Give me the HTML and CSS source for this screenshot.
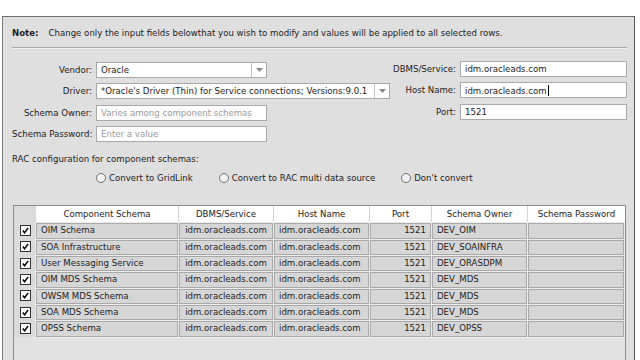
FILE: index.html
```html
<!DOCTYPE html>
<html>
<head>
<meta charset="utf-8">
<link rel="stylesheet" href="styles.css">
</head>
<body>
<div class="top"></div>
<div class="panel">
  <div class="note"><b>Note:</b><span class="note-text">Change only the input fields belowthat you wish to modify and values will be applied to all selected rows.</span></div>
  <div class="sep"></div>
  <div class="form">
    <div class="fgrid left">
      <label>Vendor:</label>
      <div class="field combo w171"><span class="val">Oracle</span><span class="arrow"><svg width="7" height="4" viewBox="0 0 7 4"><path d="M0 0H7L3.5 4Z" fill="#888"/></svg></span></div>
      <label>Driver:</label>
      <div class="field combo w294"><span class="val">*Oracle's Driver (Thin) for Service connections; Versions:9.0.1</span><span class="arrow"><svg width="7" height="4" viewBox="0 0 7 4"><path d="M0 0H7L3.5 4Z" fill="#888"/></svg></span></div>
      <label>Schema Owner:</label>
      <div class="field w171"><span class="ph">Varies among component schemas</span></div>
      <label>Schema Password:</label>
      <div class="field w171"><span class="ph">Enter a value</span></div>
    </div>
    <div class="fgrid right">
      <label>DBMS/Service:</label>
      <div class="field w167"><span class="val">idm.oracleads.com</span></div>
      <label>Host Name:</label>
      <div class="field w167"><span class="val">idm.oracleads.com<span class="caret"></span></span></div>
      <label>Port:</label>
      <div class="field w167"><span class="val">1521</span></div>
    </div>
  </div>
  <div class="rac">RAC configuration for component schemas:</div>
  <div class="radios">
    <span class="radio"><span class="circle"></span>Convert to GridLink</span>
    <span class="radio"><span class="circle"></span>Convert to RAC multi data source</span>
    <span class="radio"><span class="circle"></span>Don't convert</span>
  </div>
  <div class="tablebox">
    <div class="tgrid">
      <div class="hcb"></div>
      <div class="th">Component Schema</div>
      <div class="th">DBMS/Service</div>
      <div class="th">Host Name</div>
      <div class="th">Port</div>
      <div class="th">Schema Owner</div>
      <div class="th last">Schema Password</div>

      <div class="cbcell"><span class="cb"><svg width="10" height="10" viewBox="0 0 10 10"><path d="M2 5L4 7.5L8 2" stroke="#000" stroke-width="1.6" fill="none"/></svg></span></div>
      <div class="td">OIM Schema</div><div class="td c">idm.oracleads.com</div><div class="td">idm.oracleads.com</div><div class="td r">1521</div><div class="td">DEV_OIM</div><div class="td"></div>

      <div class="cbcell"><span class="cb"><svg width="10" height="10" viewBox="0 0 10 10"><path d="M2 5L4 7.5L8 2" stroke="#000" stroke-width="1.6" fill="none"/></svg></span></div>
      <div class="td">SOA Infrastructure</div><div class="td c">idm.oracleads.com</div><div class="td">idm.oracleads.com</div><div class="td r">1521</div><div class="td">DEV_SOAINFRA</div><div class="td"></div>

      <div class="cbcell"><span class="cb"><svg width="10" height="10" viewBox="0 0 10 10"><path d="M2 5L4 7.5L8 2" stroke="#000" stroke-width="1.6" fill="none"/></svg></span></div>
      <div class="td">User Messaging Service</div><div class="td c">idm.oracleads.com</div><div class="td">idm.oracleads.com</div><div class="td r">1521</div><div class="td">DEV_ORASDPM</div><div class="td"></div>

      <div class="cbcell"><span class="cb"><svg width="10" height="10" viewBox="0 0 10 10"><path d="M2 5L4 7.5L8 2" stroke="#000" stroke-width="1.6" fill="none"/></svg></span></div>
      <div class="td">OIM MDS Schema</div><div class="td c">idm.oracleads.com</div><div class="td">idm.oracleads.com</div><div class="td r">1521</div><div class="td">DEV_MDS</div><div class="td"></div>

      <div class="cbcell"><span class="cb"><svg width="10" height="10" viewBox="0 0 10 10"><path d="M2 5L4 7.5L8 2" stroke="#000" stroke-width="1.6" fill="none"/></svg></span></div>
      <div class="td">OWSM MDS Schema</div><div class="td c">idm.oracleads.com</div><div class="td">idm.oracleads.com</div><div class="td r">1521</div><div class="td">DEV_MDS</div><div class="td"></div>

      <div class="cbcell"><span class="cb"><svg width="10" height="10" viewBox="0 0 10 10"><path d="M2 5L4 7.5L8 2" stroke="#000" stroke-width="1.6" fill="none"/></svg></span></div>
      <div class="td">SOA MDS Schema</div><div class="td c">idm.oracleads.com</div><div class="td">idm.oracleads.com</div><div class="td r">1521</div><div class="td">DEV_MDS</div><div class="td"></div>

      <div class="cbcell"><span class="cb"><svg width="10" height="10" viewBox="0 0 10 10"><path d="M2 5L4 7.5L8 2" stroke="#000" stroke-width="1.6" fill="none"/></svg></span></div>
      <div class="td">OPSS Schema</div><div class="td c">idm.oracleads.com</div><div class="td">idm.oracleads.com</div><div class="td r">1521</div><div class="td">DEV_OPSS</div><div class="td"></div>
    </div>
  </div>
</div>
</body>
</html>
```

FILE: styles.css
```css
html, body {
  margin: 0;
  padding: 0;
  width: 640px;
  height: 360px;
  overflow: hidden;
  background: #ffffff;
  font-family: "DejaVu Sans", "Liberation Sans", sans-serif;
  font-size: 8.6px;
  color: #222;
}
.top {
  height: 16px;
}
.panel {
  margin-left: 2px;
  width: 631px;
  height: 343px;
  background: #dfdfdf;
  border-top: 1px solid #6b6b6b;
  border-left: 1px solid #7a7a7a;
  border-right: 1px solid #555;
  overflow: hidden;
}
.note {
  padding: 10px 0 0 9px;
  line-height: 12px;
  height: 12px;
  white-space: nowrap;
}
.note b {
  font-weight: bold;
}
.note-text {
  margin-left: 10px;
}
.sep {
  margin: 8px 0 0 9px;
  width: 615px;
  height: 1px;
  background: #a8a8a8;
  border-bottom: 1px solid #f4f4f4;
}
.form {
  display: flex;
  margin-top: 12px;
  padding-left: 9px;
  padding-right: 7px;
}
.fgrid {
  display: grid;
  grid-auto-rows: 16px;
  row-gap: 5.4px;
  column-gap: 4px;
  align-items: center;
}
.left {
  grid-template-columns: 80px auto;
  padding-top: 1px;
}
.right {
  margin-left: auto;
  grid-template-columns: auto 167px;
}
label {
  text-align: right;
  white-space: nowrap;
  line-height: 16px;
}
.field {
  box-sizing: border-box;
  height: 16px;
  background: #fff;
  border: 1px solid #a9a9a9;
  display: flex;
  align-items: center;
  overflow: hidden;
  white-space: nowrap;
}
.w171 { width: 171px; }
.w294 { width: 294px; }
.w167 { width: 167px; }
.val {
  padding-left: 4px;
  flex: 1;
  overflow: hidden;
}
.ph {
  padding-left: 4px;
  color: #9a9a9a;
}
.combo .arrow {
  width: 14px;
  height: 100%;
  border-left: 1px solid #c2c2c2;
  display: flex;
  align-items: center;
  justify-content: center;
  flex: none;
}
.caret {
  display: inline-block;
  width: 1px;
  height: 11px;
  background: #000;
  vertical-align: -2px;
  margin-left: 1px;
}
.rac {
  margin: 11px 0 0 9px;
  line-height: 12px;
}
.radios {
  display: flex;
  gap: 26px;
  margin-top: 7px;
  padding-left: 93px;
  line-height: 12px;
}
.radio {
  display: flex;
  align-items: center;
  white-space: nowrap;
}
.circle {
  box-sizing: border-box;
  width: 10px;
  height: 10px;
  border-radius: 50%;
  border: 1px solid #707070;
  background: #f2f2f2;
  margin-right: 3px;
}
.tablebox {
  margin: 21px 0 0 10px;
  width: 611px;
  height: 200px;
  border: 1px solid #8c8c8c;
  background: #e2e2e2;
}
.tgrid {
  display: grid;
  grid-template-columns: 22px 143px 95px 96px 62px 96px 97px;
  grid-template-rows: 16px;
  grid-auto-rows: 16.35px;
}
.hcb {
  background: #dadada;
}
.th {
  background: #fff;
  text-align: center;
  line-height: 16px;
  border-right: 1px solid #d4d4d4;
  white-space: nowrap;
  overflow: hidden;
}
.th.last {
  border-right: none;
}
.cbcell {
  background: #dadada;
  display: flex;
  align-items: center;
  justify-content: center;
}
.cb {
  box-sizing: border-box;
  width: 11px;
  height: 11px;
  border: 1px solid #333;
  background: #fff;
  display: flex;
  align-items: center;
  justify-content: center;
}
.cb svg {
  width: 9px;
  height: 9px;
}
.td {
  box-sizing: border-box;
  background: #d6d6d6;
  border: 1px solid #a9a9a9;
  outline: 1px solid #ececec;
  outline-offset: 0;
  margin: 1px 1px 0 0;
  padding: 0 4px;
  line-height: 13px;
  white-space: nowrap;
  overflow: hidden;
}
.td.c {
  text-align: center;
}
.td.r {
  text-align: right;
}
```
